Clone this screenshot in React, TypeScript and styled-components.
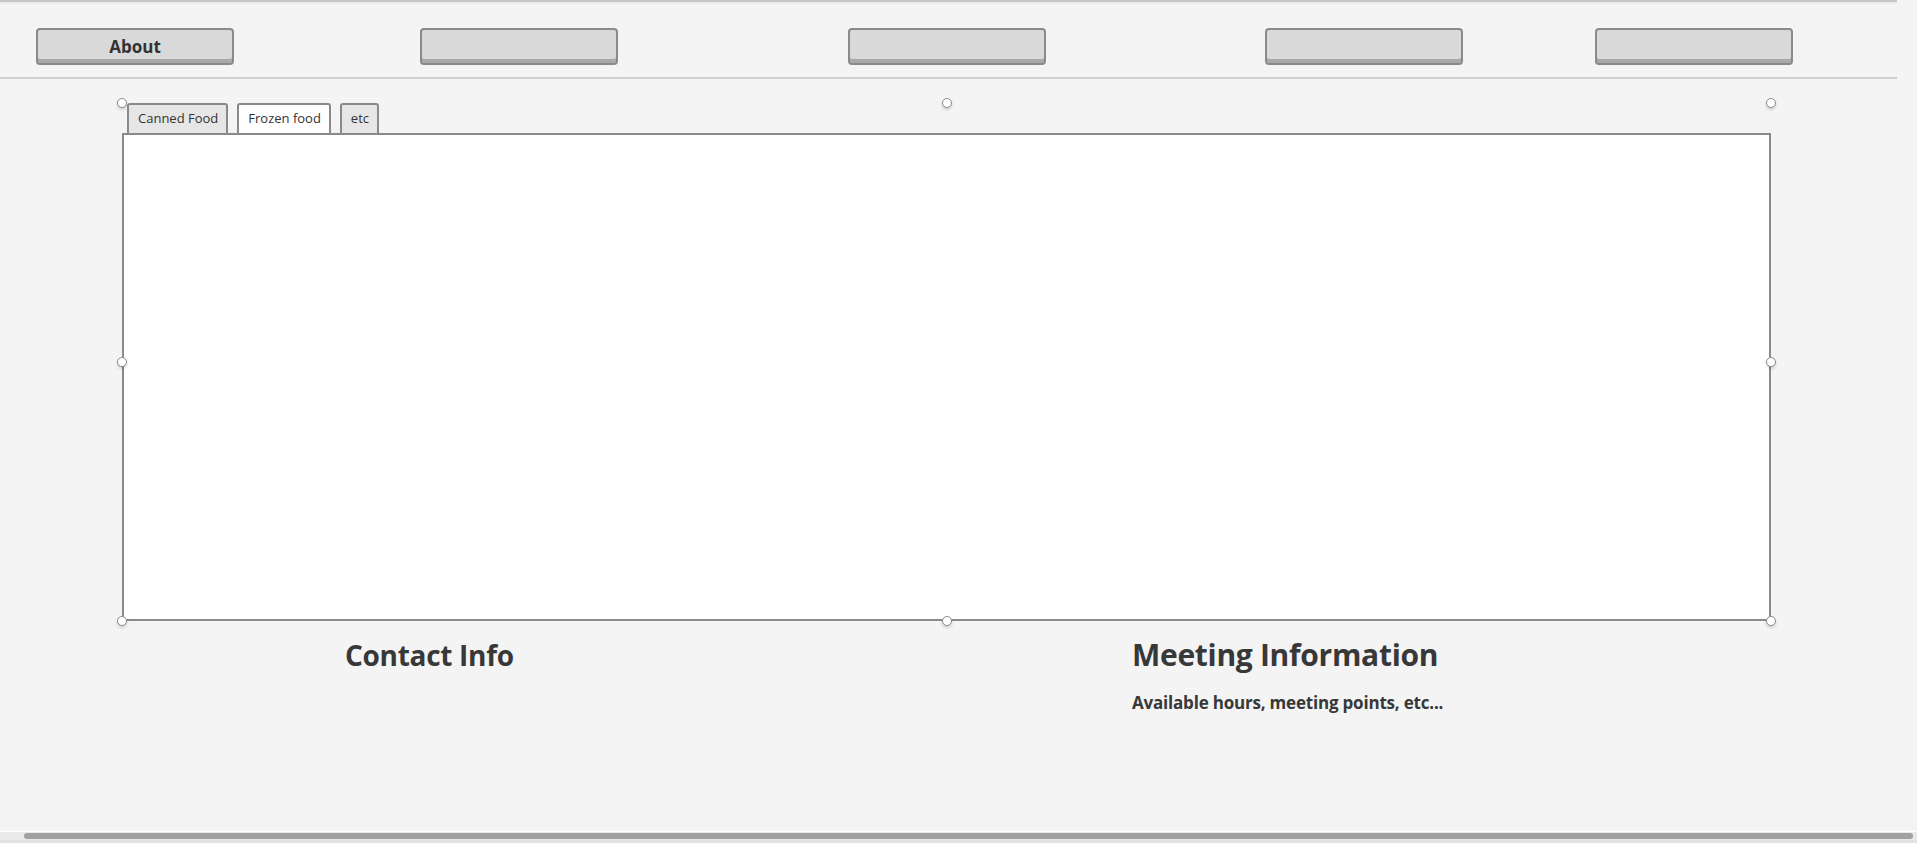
import React from 'react';
import styled, { createGlobalStyle } from 'styled-components';

const GlobalStyle = createGlobalStyle`
  html, body {
    margin: 0;
    padding: 0;
    background: #f4f4f4;
    overflow: hidden;
  }
  body {
    font-family: "Open Sans", "Noto Sans", sans-serif;
    color: #333;
  }
`;

const Page = styled.div`
  height: 100vh;
  display: flex;
  flex-direction: column;
  background: #f4f4f4;
`;

const Header = styled.header`
  width: 1897px;
  box-sizing: border-box;
  border-top: 2px solid #c6c6c6;
  border-bottom: 2px solid #cfcfcf;
  box-shadow: inset 0 2px 2px rgba(0, 0, 0, 0.04);
  padding: 26px 0 12px 36px;
  display: flex;
  align-items: center;
`;

const NavButton = styled.button<{ $offset: number }>`
  margin-left: ${p => p.$offset}px;
  width: 198px;
  height: 37px;
  box-sizing: border-box;
  border: 2px solid #8a8a8a;
  border-radius: 4px;
  background: #d9d9d9;
  box-shadow: inset 0 -4px 0 #a8a8a8;
  padding: 0 0 1px;
  font-family: "Open Sans", "Noto Sans", sans-serif;
  font-weight: 700;
  font-size: 17px;
  color: #333;
  cursor: pointer;
`;

const Stage = styled.section`
  position: relative;
  margin: 24px 0 0 122px;
  width: 1649px;
`;

const TabRow = styled.div`
  display: flex;
  gap: 9px;
  padding-left: 5px;
  height: 30px;
`;

const Tab = styled.div<{ $active?: boolean }>`
  box-sizing: border-box;
  height: 30px;
  padding: 3px 8px 0 9px;
  border: 2px solid #8a8a8a;
  border-bottom: none;
  border-radius: 3px 3px 0 0;
  background: ${p => (p.$active ? '#fff' : '#e6e6e6')};
  font-size: 13px;
  line-height: 20px;
  color: #333;
`;

const Panel = styled.div`
  box-sizing: border-box;
  height: 488px;
  border: 2px solid #8a8a8a;
  background: #fff;
`;

const Handle = styled.span<{ $x: string; $y: string }>`
  position: absolute;
  left: ${p => p.$x};
  top: ${p => p.$y};
  width: 10px;
  height: 10px;
  margin: -5px 0 0 -5px;
  box-sizing: border-box;
  border-radius: 50%;
  border: 1px solid #8a8a8a;
  background: #fff;
  box-shadow: 0 2px 3px rgba(0, 0, 0, 0.15);
`;

const Info = styled.div`
  display: grid;
  grid-template-columns: 1132px 1fr;
  margin-top: 14px;
`;

const Column = styled.div<{ $pad: number }>`
  padding-left: ${p => p.$pad}px;
`;

const Heading = styled.h2<{ $size: number }>`
  margin: 0;
  font-size: ${p => p.$size}px;
  line-height: 40px;
  font-weight: 700;
  color: #383838;
  letter-spacing: -0.3px;
`;

const Note = styled.p`
  margin: 16px 0 0;
  font-size: 17px;
  font-weight: 700;
  color: #383838;
  letter-spacing: -0.2px;
`;

const Scrollbar = styled.div`
  margin-top: auto;
  height: 12px;
  box-sizing: border-box;
  border-top: 1px solid #fff;
  border-bottom: 3px solid #e2e2e2;
  background: #e9e9e9;
  padding: 1px 4px 1px 24px;
  display: flex;
`;

const Thumb = styled.div`
  flex: 1;
  border-radius: 4px;
  background: #a1a1a1;
`;

const buttons = [
  { label: 'About', offset: 0 },
  { label: '', offset: 186 },
  { label: '', offset: 230 },
  { label: '', offset: 219 },
  { label: '', offset: 132 },
];

const handles = [
  ['0%', '0%'], ['50%', '0%'], ['100%', '0%'],
  ['0%', '50%'], ['100%', '50%'],
  ['0%', '100%'], ['50%', '100%'], ['100%', '100%'],
];

export default function App() {
  return (
    <Page>
      <GlobalStyle />
      <Header>
        {buttons.map((b, i) => (
          <NavButton key={i} $offset={b.offset}>{b.label}</NavButton>
        ))}
      </Header>
      <Stage>
        <TabRow>
          <Tab>Canned Food</Tab>
          <Tab $active>Frozen food</Tab>
          <Tab>etc</Tab>
        </TabRow>
        <Panel />
        {handles.map(([x, y], i) => (
          <Handle key={i} $x={x} $y={y} />
        ))}
      </Stage>
      <Info>
        <Column $pad={345}>
          <Heading $size={28}>Contact Info</Heading>
        </Column>
        <Column $pad={0}>
          <Heading $size={30}>Meeting Information</Heading>
          <Note>Available hours, meeting points, etc...</Note>
        </Column>
      </Info>
      <Scrollbar>
        <Thumb />
      </Scrollbar>
    </Page>
  );
}
